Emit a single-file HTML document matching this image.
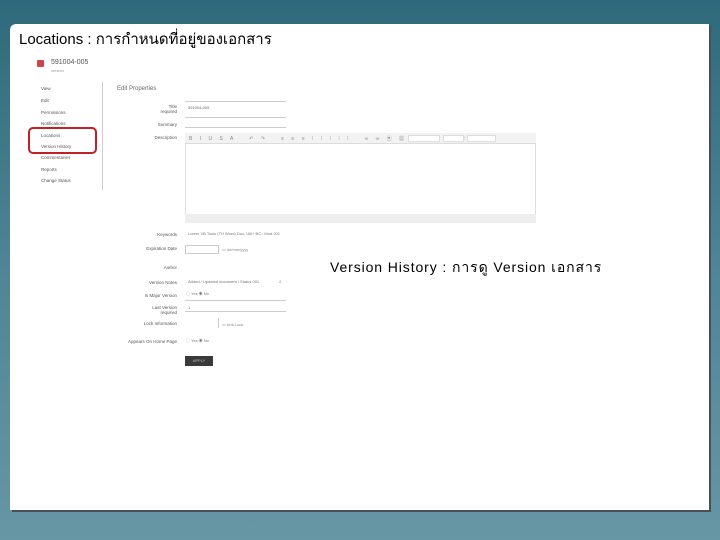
<!DOCTYPE html>
<html><head><meta charset="utf-8"><style>
*{margin:0;padding:0;box-sizing:border-box}
body{width:720px;height:540px;overflow:hidden;background:linear-gradient(180deg,#2e6a7b 0%,#4f8596 50%,#6796a5 100%);font-family:"Liberation Sans","Noto Sans CJK SC",sans-serif;position:relative}
#panel{position:absolute;left:10px;top:24px;width:699px;height:486px;background:#fff;border-top-left-radius:6px;box-shadow:2px 2px 0 #4a4f55}
.a{position:absolute;white-space:nowrap}
.t{font-size:6px;color:#555}
.lbl{font-size:4.5px;color:#555;text-align:right;width:60px}
.line{position:absolute;height:1px;background:#ccc}
.tb{position:absolute;font-size:5px;color:#888}
</style></head><body>
<div id="panel"></div>
<div class="a" style="left:19px;top:27px;font-size:15px;color:#000">Locations : การกำหนดที่อยู่ของเอกสาร</div>
<div class="a" style="left:37px;top:60px;width:7px;height:7px;background:#c44;border-radius:1px"></div>
<div class="a" style="left:51px;top:59px;font-size:7px;color:#555">591004-005</div>
<div class="a" style="left:51px;top:68px;font-size:4px;color:#999">version</div>
<div class="a t" style="left:41px;top:86px;font-size:4.5px">View</div>
<div class="a t" style="left:41px;top:98px;font-size:4.5px">Edit</div>
<div class="a t" style="left:41px;top:110px;font-size:4.5px">Permissions</div>
<div class="a t" style="left:41px;top:121px;font-size:4.5px">Notifications</div>
<div class="a t" style="left:41px;top:133px;font-size:4.5px">Locations</div>
<div class="a t" style="left:41px;top:144px;font-size:4.5px">Version History</div>
<div class="a t" style="left:41px;top:155px;font-size:4.5px">Commentaries</div>
<div class="a t" style="left:41px;top:167px;font-size:4.5px">Reports</div>
<div class="a t" style="left:41px;top:178px;font-size:4.5px">Change Status</div>
<div class="a" style="left:28px;top:127px;width:69px;height:27px;border:2.5px solid #c0202a;border-radius:5px"></div>
<div class="line" style="left:102px;top:82px;width:1px;height:108px"></div>
<div class="a" style="left:117px;top:86px;font-size:6px;color:#666">Edit Properties</div>
<div class="a lbl" style="left:117px;top:104px">Title<br>required</div>
<div class="a" style="left:188px;top:105px;font-size:4px;color:#666">591004-005</div>
<div class="line" style="left:185px;top:101px;width:101px"></div>
<div class="line" style="left:185px;top:117px;width:101px"></div>
<div class="a lbl" style="left:117px;top:122px">Summary</div>
<div class="line" style="left:185px;top:127px;width:101px"></div>
<div class="a lbl" style="left:117px;top:135px">Description</div>
<div class="a" style="left:185px;top:133px;width:351px;height:90px;border:1px solid #ddd;background:#fff"></div>
<div class="a" style="left:185px;top:133px;width:351px;height:11px;background:#f2f2f2;border-bottom:1px solid #ddd"></div>
<div class="tb" style="left:189px;top:135px;letter-spacing:3px">B I U S A &nbsp; ↶ ↷ &nbsp; ≡ ≡ ≡ ⁞ ⁞ ⁞ ⁞ ⁞ &nbsp; ∞ ∞ ▣ ▦ ▤ Ω ▣ ▣ ▣</div>
<div class="a" style="left:408px;top:135px;width:32px;height:7px;background:#fff;border:1px solid #ddd"></div>
<div class="a" style="left:443px;top:135px;width:21px;height:7px;background:#fff;border:1px solid #ddd"></div>
<div class="a" style="left:467px;top:135px;width:29px;height:7px;background:#fff;border:1px solid #ddd"></div>
<div class="a" style="left:185px;top:214px;width:351px;height:9px;background:#eee"></div>
<div class="a lbl" style="left:117px;top:232px">Keywords</div>
<div class="a" style="left:188px;top:231px;font-size:4px;color:#777">Lorem VB Tools (TH Word) Doc, Util+ BC : Mod 201</div>
<div class="a lbl" style="left:117px;top:246px">Expiration Date</div>
<div class="a" style="left:185px;top:245px;width:34px;height:9px;border:1px solid #ccc"></div>
<div class="a" style="left:222px;top:247px;font-size:4px;color:#888">▭ dd/mm/yyyy</div>
<div class="a lbl" style="left:117px;top:265px">Author</div>
<div class="a" style="left:330px;top:257px;font-size:14px;color:#000;letter-spacing:0.9px">Version History : การดู Version เอกสาร</div>
<div class="a lbl" style="left:117px;top:280px">Version Notes</div>
<div class="a" style="left:188px;top:279px;font-size:4px;color:#777">Added / Updated document / Status 001 &nbsp;&nbsp;&nbsp;&nbsp;&nbsp;&nbsp;&nbsp;&nbsp;&nbsp;&nbsp;&nbsp;&nbsp;&nbsp;&nbsp;&nbsp;&nbsp;&nbsp;2</div>
<div class="a lbl" style="left:117px;top:293px">Is Major Version</div>
<div class="a" style="left:186px;top:291px;font-size:4px;color:#777">◯ Yes ◉ No</div>
<div class="line" style="left:185px;top:300px;width:101px"></div>
<div class="a lbl" style="left:117px;top:305px">Last Version<br>required</div>
<div class="a" style="left:188px;top:305px;font-size:4px;color:#777">1</div>
<div class="line" style="left:185px;top:311px;width:101px"></div>
<div class="a lbl" style="left:117px;top:321px">Lock Information</div>
<div class="line" style="left:218px;top:318px;width:1px;height:10px"></div>
<div class="a" style="left:222px;top:322px;font-size:4px;color:#888">▭ Anti-Lock</div>
<div class="a lbl" style="left:101px;top:339px;width:76px">Appears On Home Page</div>
<div class="a" style="left:186px;top:338px;font-size:4px;color:#777">◯ Yes ◉ No</div>
<div class="a" style="left:185px;top:356px;width:28px;height:10px;background:#3a3a3a;color:#bbb;font-size:4px;text-align:center;line-height:10px">APPLY</div>
</body></html>
